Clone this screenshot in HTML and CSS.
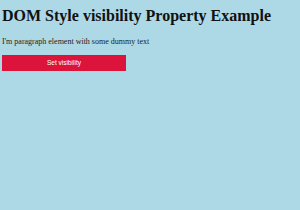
FILE: index.html
```html
<!DOCTYPE html>
<html lang="en">
<head>
    <meta charset="UTF-8">
    <meta name="viewport" content="width=device-width, initial-scale=1.0">
    <title>DOM Style visibility Property</title>
    <link rel="stylesheet" href="styles.css">
</head>
<body>

<h1>DOM Style visibility Property Example</h1>
<p id="demo">I'm paragraph element with some dummy text</p>
<button class="vis-btn" onclick="setVisibility()">Set visibility</button>

<script>
    function setVisibility() {
        document.getElementById("demo").style.visibility = "hidden";
    }
</script>

</body>
</html>
```
FILE: styles.css
```css
body {
    font-family: "Liberation Serif", "Times New Roman", serif;
    margin: 4px 2px;
    background-color: lightblue;
}
h1 {
    font-size: 16px;
    margin: 3px 0 12px;
    color: #111;
}
p {
    font-size: 8px;
    margin: 0 0 8.5px;
    color: #222;
}
.vis-btn {
    display: block;
    width: 124px;
    height: 16px;
    background: crimson;
    color: white;
    border: none;
    font-family: "Liberation Sans", Arial, sans-serif;
    font-size: 6.5px;
    cursor: pointer;
}
```
